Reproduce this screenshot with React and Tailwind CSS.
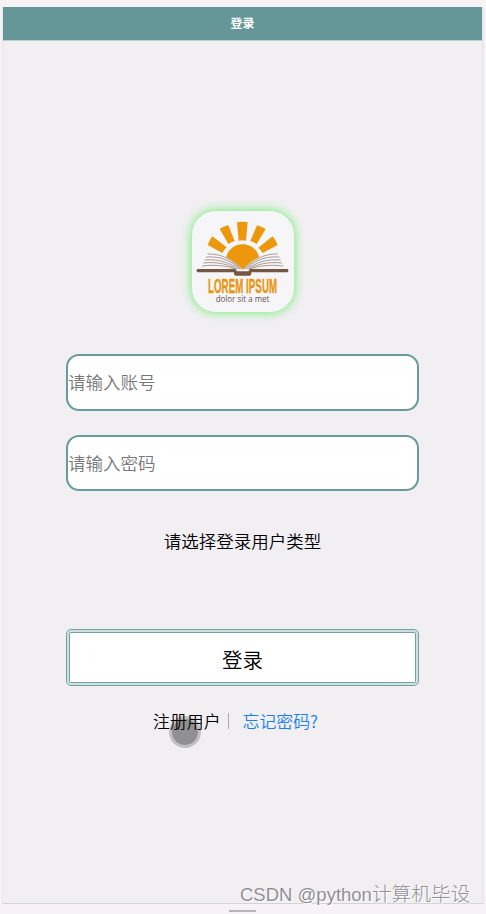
import { useState } from "react";

const fields = [
  { name: "account", type: "text", placeholder: "请输入账号", size: "h-[57px]" },
  { name: "password", type: "password", placeholder: "请输入密码", size: "h-14" },
];

function Logo() {
  return (
    <div className="h-[101px] w-[102px] overflow-hidden rounded-[24px] bg-[#f6f5f7] shadow-[0_0_9px_2px_#90ee90]">
      <svg viewBox="36 33 306 303" className="h-full w-full">
        {/* sun */}
        <g fill="#ec970c">
          <path d="M171 67Q187 64 203 67L198 122Q187 120 176 122Z" />
          <path d="M119 86Q132 78 145 76L164 123Q154 126 145 132Z" />
          <path d="M97 109L140 142Q132 149 127 159L83 135Q88 121 97 109Z" />
          <path d="M231 76Q244 79 257 87L230 132Q221 126 211 123Z" />
          <path d="M278 109Q288 121 293 135L248 159Q243 150 235 143Z" />
          <path d="M136 185C138 154 160 133 188 133C216 133 238 154 240 185L188 209Z" />
        </g>
        {/* open book */}
        <g fill="#f6f5f7">
          <path d="M83 160C128 158 162 182 188 209H66Z" />
          <path d="M293 160C248 158 214 182 188 209H310Z" />
        </g>
        <g fill="none" stroke="#8d7d72" strokeWidth="2.2">
          <path d="M83 162C128 160 160 184 184 207" />
          <path d="M78 171C124 167 157 186 180 207" />
          <path d="M74 180C119 176 152 190 175 207" />
          <path d="M70 189C112 184 148 194 170 207" />
          <path d="M66 198C108 193 143 198 165 207" />
          <path d="M293 162C248 160 216 184 192 207" />
          <path d="M298 171C252 167 219 186 196 207" />
          <path d="M302 180C257 176 224 190 201 207" />
          <path d="M306 189C264 184 228 194 206 207" />
          <path d="M310 198C268 193 233 198 211 207" />
        </g>
        <path
          d="M54 207H165Q169 207 170 214H206Q207 207 211 207H322Q325 207 325 211V214Q325 217 321 217H214V221Q214 227 208 227H168Q162 227 162 221V217H54Q50 217 50 213V211Q50 207 54 207Z"
          fill="#755744"
        />
        <text
          transform="translate(84 278) scale(0.5 1)"
          textLength="414"
          fill="#e8960f"
          stroke="#e8960f"
          strokeWidth="1.2"
          className="font-['Liberation_Sans',sans-serif] text-[58px] font-bold"
        >
          LOREM IPSUM
        </text>
        <text
          x="107"
          y="305"
          textLength="161"
          lengthAdjust="spacingAndGlyphs"
          fill="#5f5651"
          className="font-['Open_Sans',sans-serif] text-[25px]"
        >
          dolor sit a met
        </text>
      </svg>
    </div>
  );
}

function App() {
  const [form, setForm] = useState({ account: "", password: "" });

  return (
    <div className="relative h-[914px] w-[486px] overflow-hidden bg-[#f6f2f5] pt-[7px] font-['Noto_Sans_CJK_SC',sans-serif] text-black">
      <div className="ml-[2px] flex h-[897px] w-[482px] flex-col border-r-2 border-b border-l border-r-[#e9e8ea] border-b-[#d4d3d6] border-l-[#e7e6e9] bg-[#f1eff2]">
        <header className="flex h-[34px] shrink-0 items-center justify-center border-b border-[#b9cfd0] bg-[#669798] pb-px text-xs font-bold text-white">
          登录
        </header>

        <form
          className="ml-[63px] flex w-[353px] flex-col items-center pt-[170px]"
          onSubmit={(e) => e.preventDefault()}
        >
          <Logo />

          <div className="mt-[42px] flex w-full flex-col gap-6">
            {fields.map((field) => (
              <input
                key={field.name}
                type={field.type}
                value={form[field.name]}
                placeholder={field.placeholder}
                onChange={(e) => setForm({ ...form, [field.name]: e.target.value })}
                className={`${field.size} w-full rounded-[13px] border-2 border-[#699b9c] bg-white pb-0.5 text-[17.5px] font-[350] outline-none placeholder:text-[#777]`}
              />
            ))}
          </div>

          <p className="mt-9 text-[17.5px] leading-7 font-[350]">请选择登录用户类型</p>

          <button
            type="submit"
            className="mt-[74px] h-[57px] w-full rounded-[5px] border-4 border-double border-[#74a1a3] bg-[#cfe0e1] bg-clip-border text-[20.5px] font-[350]"
          >
            <span className="flex h-full w-full items-center justify-center rounded-[1px] bg-white pt-1">登录</span>
          </button>

          <div className="mt-[21px] flex h-7 w-full items-center pl-[87px] text-[16.9px] leading-7 font-[350]">
            <span>注册用户</span>
            <span className="ml-[7px] h-4 w-px bg-[#aaa]" />
            <span className="ml-[14px] text-[#187ff0]">忘记密码?</span>
          </div>
        </form>
      </div>

      {/* touch pointer */}
      <div className="absolute top-[716px] left-[169px] h-8 w-8 rounded-full border-[3px] border-black/20 bg-black/40 bg-clip-padding" />

      <div className="absolute bottom-[2px] left-[229px] h-[2px] w-[27px] bg-[#b7b5b8]" />

      <div className="absolute top-[879px] left-[240px] text-[19.7px] leading-7 font-light whitespace-nowrap text-[#929094] [text-shadow:1px_1px_0_#fff]">
        <span className="font-['Liberation_Sans',sans-serif] text-[18.5px]">CSDN @python</span>
        计算机毕设
      </div>
    </div>
  );
}

export default App;
